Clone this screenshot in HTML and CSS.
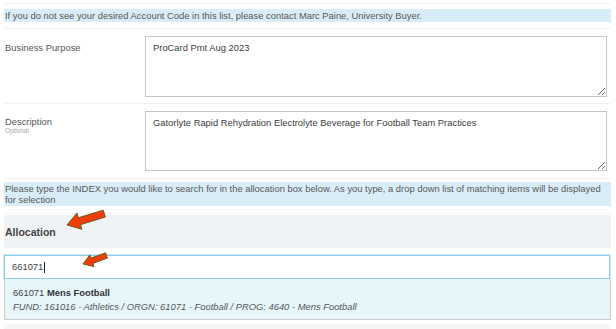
FILE: index.html
```html
<!DOCTYPE html>
<html>
<head>
<meta charset="utf-8">
<link rel="stylesheet" href="styles.css">
</head>
<body>
<div class="page">
  <div class="sep sep-top"></div>
  <div class="banner banner-1">If you do not see your desired Account Code in this list, please contact Marc Paine, University Buyer.</div>
  <div class="sep sep-a"></div>
  <div class="row row-1">
    <div class="label">Business Purpose</div>
    <textarea class="field field-1">ProCard Pmt Aug 2023</textarea>
  </div>
  <div class="sep"></div>
  <div class="row row-2">
    <div class="label label-2">Description<span class="hint">Optional</span></div>
    <textarea class="field field-2">Gatorlyte Rapid Rehydration Electrolyte Beverage for Football Team Practices</textarea>
  </div>
  <div class="sep"></div>
  <div class="banner banner-2">Please type the INDEX you would like to search for in the allocation box below. As you type, a drop down list of matching items will be displayed for selection</div>
  <div class="sep sep-b"></div>
  <div class="section-head">Allocation</div>
  <div class="search">661071<span class="caret"></span></div>
  <div class="dropdown">
    <div class="opt-title">661071 <b>Mens Football</b></div>
    <div class="opt-detail">FUND: 161016 - Athletics / ORGN: 61071 - Football / PROG: 4640 - Mens Football</div>
  </div>
  <div class="next-section"></div>

  <svg class="arrow arrow-1" width="50" height="30" viewBox="0 0 50 30">
    <polygon transform="translate(7,20) rotate(-17)" points="0,0 13,-8.5 13,-3.6 39,-3.6 39,3.6 13,3.6 13,8.5" />
  </svg>
  <svg class="arrow arrow-2" width="36" height="26" viewBox="0 0 36 26">
    <polygon transform="translate(8,16) rotate(-20)" points="0,0 9.5,-6.2 9.5,-2.8 25,-2.8 25,2.8 9.5,2.8 9.5,6.2" />
  </svg>
</div>
</body>
</html>
```

FILE: styles.css
```css
html, body {
  margin: 0;
  padding: 0;
  background: #ffffff;
}
body {
  font-family: "Liberation Sans", Arial, sans-serif;
  font-size: 9.4px;
  color: #555555;
}
.page {
  position: relative;
  padding: 0 5px 0 4px;
  height: 329px;
  overflow: hidden;
}
.sep {
  height: 1px;
  background: #f2f2f2;
}
.sep-top { margin-top: 3px; }
.banner {
  background: #d9edf8;
  line-height: 11px;
  padding: 1px 1px;
  color: #585858;
}
.banner-1 { margin-top: 5px; }
.sep-a { margin-top: 6px; }
.row {
  display: flex;
  align-items: flex-start;
}
.row-1 { padding: 7px 0 6px; }
.row-2 { padding: 7px 0 7px; }
.label {
  width: 140px;
  padding: 6px 0 0 1px;
  line-height: 11px;
  color: #555555;
  flex: none;
}
.label-2 { padding-top: 5px; }
.hint {
  display: block;
  font-size: 6.4px;
  line-height: 7px;
  color: #a8a8a8;
}
.field {
  box-sizing: border-box;
  width: 462px;
  margin: 0;
  border: 1px solid #c6c6c6;
  border-radius: 0;
  padding: 5px 7px;
  font-family: "Liberation Sans", Arial, sans-serif;
  font-size: 9.4px;
  line-height: 11px;
  color: #3c3c3c;
  background: #ffffff;
  outline: none;
}
.field-1 { height: 61px; }
.field-2 { height: 60px; }
.banner-2 { margin-top: 3px; }
.sep-b { margin-top: 7px; }
.section-head {
  margin-top: 1px;
  background: #f0f3f6;
  padding: 11px 1px 9px;
  font-size: 10.5px;
  line-height: 13px;
  font-weight: bold;
  color: #444444;
}
.search {
  margin: 7px 1px 0 0;
  box-sizing: border-box;
  height: 24px;
  border: 1px solid #8fcdec;
  box-shadow: 0 0 0 1px #c9e8f6;
  background: #ffffff;
  padding: 0 7px;
  line-height: 22px;
  color: #444444;
  display: flex;
  align-items: center;
}
.caret {
  display: inline-block;
  width: 1px;
  height: 11px;
  background: #222222;
  margin-left: 1px;
}
.dropdown {
  border: 1px solid #cccccc;
  border-top: none;
  background: #e7f6fb;
  padding: 7px 8px 5px;
  line-height: 14px;
}
.opt-title {
  color: #444444;
}
.opt-title b { color: #333333; }
.opt-detail {
  font-style: italic;
  color: #555555;
}
.next-section {
  margin-top: 4px;
  height: 20px;
  background: #f4f6f8;
}
.arrow {
  position: absolute;
  overflow: visible;
}
.arrow polygon {
  fill: #ee3c0b;
  stroke: #6e5c14;
  stroke-width: 0.9;
  stroke-linejoin: miter;
}
.arrow-1 { left: 60px; top: 205px; }
.arrow-2 { left: 75px; top: 248px; }
```
